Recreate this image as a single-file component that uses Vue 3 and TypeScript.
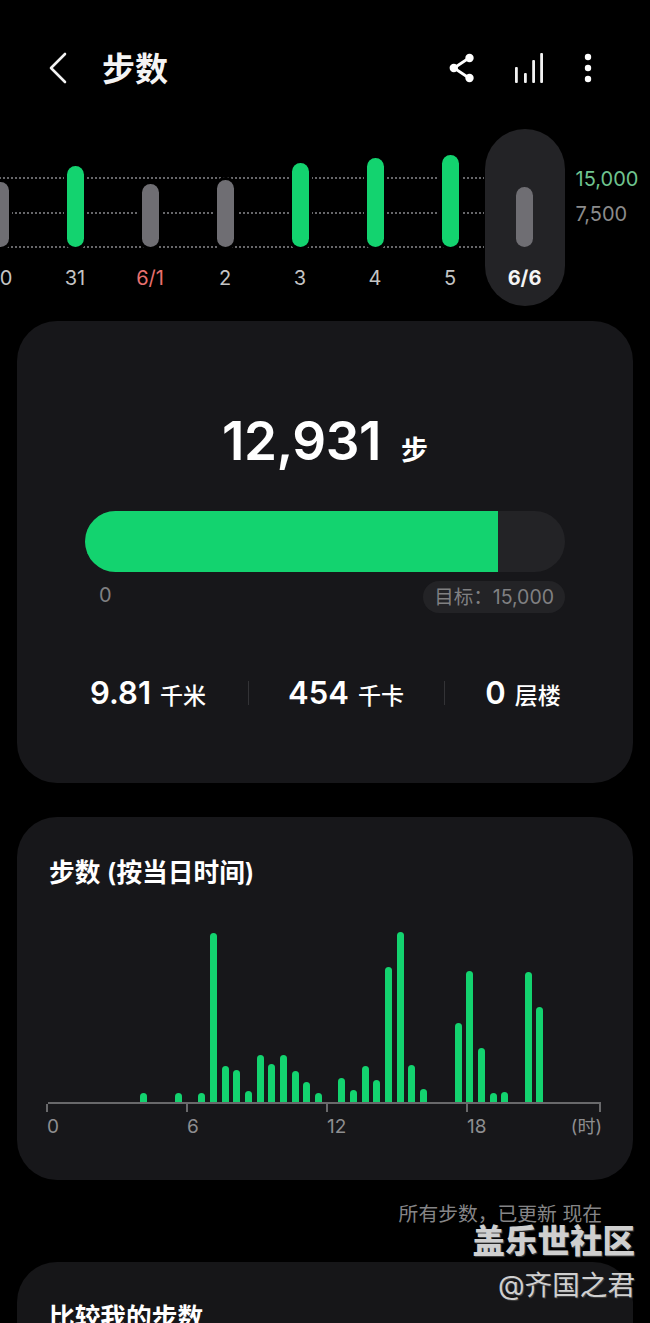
<script setup lang="ts">
interface Day {
  label: string;
  top: number;
  green: boolean;
  red?: boolean;
}

const baseline = 247;
const days: Day[] = [
  { label: "30", top: 182, green: false },
  { label: "31", top: 166, green: true },
  { label: "6/1", top: 184, green: false, red: true },
  { label: "2", top: 180, green: false },
  { label: "3", top: 163, green: true },
  { label: "4", top: 158, green: true },
  { label: "5", top: 155, green: true },
];

// half-hour slot -> bar height in px
const slots: Record<number, number> = {
  8: 9, 11: 9, 13: 9, 14: 169, 15: 36, 16: 32, 17: 11, 18: 47, 19: 38, 20: 47, 21: 31, 22: 20, 23: 9,
  25: 24, 26: 12, 27: 36, 28: 22, 29: 135, 30: 170, 31: 37, 32: 13,
  35: 79, 36: 131, 37: 54, 38: 9, 39: 10, 41: 130, 42: 95,
};
const hourBars = Array.from({ length: 47 }, (_, i) => slots[i] ?? 0);
const ticks = ["0", "6", "12", "18"];
</script>

<template>
  <div class="page">
    <header class="topbar">
      <svg class="back" width="20" height="32" viewBox="0 0 20 32" fill="none">
        <path d="M17 2 3 16l14 14" stroke="#f2f2f2" stroke-width="2.6" stroke-linecap="round" stroke-linejoin="round" />
      </svg>
      <h1 class="title">步数</h1>
      <div class="actions">
        <svg width="26" height="30" viewBox="0 0 26 30" fill="#fff">
          <path d="M20 5 5 15l15 10" fill="none" stroke="#fff" stroke-width="2.8" />
          <circle cx="20.500" cy="5" r="4.200" />
          <circle cx="4.800" cy="15" r="4.200" />
          <circle cx="20.500" cy="25" r="4.200" />
        </svg>
        <svg class="bars-icon" width="28" height="30" viewBox="0 0 28 30" fill="#f2f2f2">
          <rect x="0" y="14" width="2.800" height="16" rx="1" />
          <rect x="9" y="20" width="2.800" height="10" rx="1" />
          <rect x="17.200" y="7" width="2.800" height="23" rx="1" />
          <rect x="25.200" y="0" width="2.800" height="30" rx="1" />
        </svg>
        <svg class="more" width="8" height="30" viewBox="0 0 8 30" fill="#fff">
          <circle cx="4" cy="4" r="3.200" />
          <circle cx="4" cy="15" r="3.200" />
          <circle cx="4" cy="26" r="3.200" />
        </svg>
      </div>
    </header>

    <section class="strip">
      <div class="grid-lines">
        <i></i>
        <i></i>
        <i></i>
      </div>
      <div v-for="day in days" :key="day.label" class="day">
        <div class="day-plot">
          <div class="day-bar" :class="{ green: day.green }" :style="{ height: baseline - day.top + 'px' }"></div>
        </div>
        <span class="day-label" :class="{ red: day.red }">{{ day.label }}</span>
      </div>
      <div class="day today">
        <div class="day-plot">
          <div class="day-bar" :style="{ height: baseline - 187 + 'px' }"></div>
        </div>
        <span class="day-label">6/6</span>
      </div>
      <div class="scale">
        <span class="goal">15,000</span>
        <span>7,500</span>
      </div>
    </section>

    <section class="card summary">
      <div class="total"><b>12,931</b><span>步</span></div>
      <div class="progress"><div class="progress-fill"></div></div>
      <div class="progress-legend">
        <span class="zero">0</span>
        <span class="target">目标：15,000</span>
      </div>
      <div class="stats">
        <div class="stat"><b>9.81</b><span>千米</span></div>
        <div class="stat"><b>454</b><span>千卡</span></div>
        <div class="stat"><b>0</b><span>层楼</span></div>
      </div>
    </section>

    <section class="card hourly">
      <h2 class="card-title">步数 (按当日时间)</h2>
      <div class="plot">
        <div v-for="(h, i) in hourBars" :key="i" class="slot">
          <div v-if="h" class="hour-bar" :style="{ height: h + 'px' }"></div>
        </div>
      </div>
      <div class="axis">
        <div v-for="t in ticks" :key="t" class="tick">
          <span class="tick-label">{{ t }}</span>
          <span v-if="t === '18'" class="unit">(时)</span>
        </div>
      </div>
    </section>

    <p class="updated">所有步数，已更新 现在</p>

    <section class="card compare">
      <h2 class="card-title">比较我的步数</h2>
    </section>

    <div class="watermark">
      <strong>盖乐世社区</strong>
      <span>@齐国之君</span>
    </div>
  </div>
</template>

<style scoped>
.page {
  position: relative;
  width: 650px;
  height: 1323px;
  overflow: hidden;
  background: #000;
  color: #fff;
  font-family: Inter, "Noto Sans CJK SC", sans-serif;
}
.topbar {
  display: flex;
  align-items: center;
  height: 129px;
  padding: 7px 48px 0;
  box-sizing: border-box;
}
.back {
  flex: none;
}
.title {
  margin: 2px 0 0 34px;
  font-size: 33px;
  font-weight: 700;
  line-height: 40px;
  color: #f4f4f4;
}
.actions {
  display: flex;
  align-items: center;
  margin-left: auto;
  margin-right: 10px;
}
.bars-icon {
  margin-left: 40px;
}
.more {
  margin-left: 41px;
}
.strip {
  position: relative;
  display: flex;
  height: 177px;
  margin-left: -37.5px;
}
.grid-lines i {
  position: absolute;
  left: 0;
  width: 521px;
  height: 2px;
  background: repeating-linear-gradient(90deg, #67676a 0 1.5px, transparent 1.5px 4px);
}
.grid-lines i:nth-child(1) { top: 48px; }
.grid-lines i:nth-child(2) { top: 83px; }
.grid-lines i:nth-child(3) { top: 117px; }
.day {
  position: relative;
  display: flex;
  flex: none;
  flex-direction: column;
  align-items: center;
  width: 75px;
}
.day-plot {
  display: flex;
  align-items: flex-end;
  height: 118px;
}
.day-bar {
  width: 17px;
  border-radius: 9px;
  background: #6f6e73;
  box-shadow: 0 0 0 3px #000;
}
.day-bar.green {
  background: #13d36f;
}
.day-label {
  margin-top: 17px;
  font-size: 20px;
  line-height: 28px;
  color: #c4c4c4;
}
.day-label.red {
  color: #e8706f;
}
.today {
  width: 80px;
  margin-left: -3px;
  border-radius: 40px;
  background: #232326;
}
.today .day-bar {
  box-shadow: none;
}
.today .day-label {
  font-weight: 700;
  color: #f4f4f4;
}
.scale {
  display: flex;
  flex-direction: column;
  gap: 7px;
  margin: 36px 0 0 11px;
  font-size: 20px;
  line-height: 28px;
  color: #8b8b8b;
}
.scale .goal {
  color: #6fc48f;
}
.card {
  margin: 0 17px;
  border-radius: 40px;
  background: #17171a;
}
.summary {
  margin-top: 15px;
  padding: 90px 68px 70px;
}
.total {
  display: flex;
  align-items: baseline;
  justify-content: center;
  line-height: 60px;
}
.total b {
  font-size: 53px;
  font-weight: 600;
  letter-spacing: -0.5px;
}
.total span {
  margin-left: 20px;
  font-size: 27px;
  font-weight: 700;
}
.progress {
  height: 61px;
  margin-top: 30px;
  overflow: hidden;
  border-radius: 31px;
  background: #232326;
}
.progress-fill {
  width: 86.1%;
  height: 100%;
  background: #13d36f;
}
.progress-legend {
  display: flex;
  align-items: center;
  justify-content: space-between;
  margin-top: 9px;
  font-size: 20px;
  color: #808082;
}
.zero {
  margin: -4px 0 0 14px;
}
.target {
  height: 32px;
  padding: 0 11px;
  border-radius: 16px;
  font-size: 19.5px;
  line-height: 32px;
  background: #232326;
}
.stats {
  display: grid;
  grid-template-columns: 200px 196px 158px;
  height: 40px;
  margin: 60px -37px 0;
}
.stat {
  display: flex;
  align-items: baseline;
  justify-content: center;
  gap: 9px;
  line-height: 40px;
  position: relative;
}
.stat + .stat::before {
  content: "";
  position: absolute;
  top: 8px;
  left: 0;
  height: 24px;
  border-left: 1px solid #333336;
}
.stat b {
  font-size: 31px;
  font-weight: 600;
}
.stat span {
  font-size: 23px;
  font-weight: 500;
}
.hourly {
  height: 363px;
  margin-top: 34px;
  padding: 40px 32px 0 31px;
  box-sizing: border-box;
}
.card-title {
  margin: 0 0 0 1px;
  font-size: 25.7px;
  font-weight: 600;
  line-height: 32px;
}
.plot {
  display: flex;
  align-items: flex-end;
  height: 213px;
  margin-left: -3.5px;
}
.slot {
  display: flex;
  flex: none;
  justify-content: center;
  width: 11.67px;
}
.hour-bar {
  width: 7px;
  border-radius: 4px 4px 0 0;
  background: #13d36f;
}
.axis {
  display: grid;
  grid-template-columns: 140px 140px 140px 133px;
  border-top: 2px solid #69696b;
  font-size: 19px;
  color: #8e8e90;
}
.tick {
  display: flex;
  justify-content: space-between;
  height: 36px;
  padding-top: 3px;
  border-left: 2px solid transparent;
  background: linear-gradient(#69696b, #69696b) -2px 0 / 2px 8px no-repeat;
  line-height: 40px;
  margin-left: -2px;
}
.tick:last-child {
  background:
    linear-gradient(#69696b, #69696b) -2px 0 / 2px 8px no-repeat,
    linear-gradient(#69696b, #69696b) 100% 0 / 2px 8px no-repeat;
}
.tick-label {
  margin-left: -1px;
}
.unit {
  margin-right: -1px;
  font-size: 18px;
}
.updated {
  margin: 20px 48px 0 0;
  font-size: 19.8px;
  line-height: 28px;
  text-align: right;
  color: #858587;
}
.compare {
  height: 120px;
  margin-top: 34px;
  padding: 41px 31px 0;
  background: #161618;
}
.compare .card-title {
  line-height: 30px;
}
.watermark {
  position: absolute;
  top: 1222px;
  right: 15px;
  display: flex;
  flex-direction: column;
  align-items: flex-end;
  color: #cfcfcf;
  text-shadow: 1px 1px 1px #444;
}
.watermark strong {
  font-size: 32.5px;
  font-weight: 900;
  line-height: 40px;
}
.watermark span {
  margin-top: 3px;
  font-size: 27.6px;
  line-height: 40px;
}
</style>

<style>
body {
  background: #000;
}
</style>
